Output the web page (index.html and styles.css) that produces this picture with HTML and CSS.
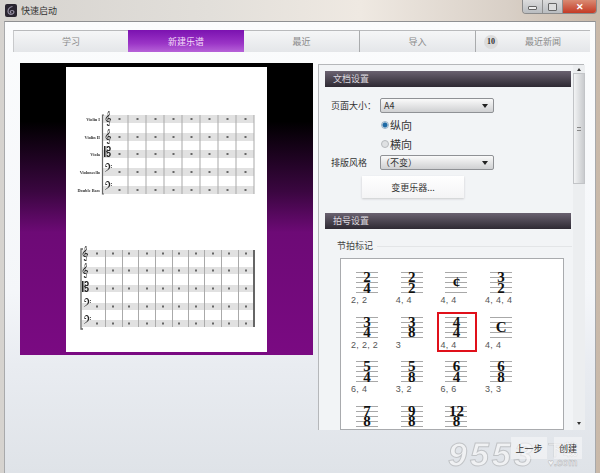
FILE: index.html
```html
<!DOCTYPE html>
<html lang="zh">
<head>
<meta charset="utf-8">
<title>快速启动</title>
<link rel="stylesheet" href="styles.css">
</head>
<body>
<div class="window">
  <header class="titlebar">
    <div class="app-icon"><svg viewBox="0 0 12 13" width="12" height="13"><rect width="12" height="13" rx="2" fill="#2a2530"/><path d="M7.5 2.5C5 3 3 5 3 7.5S5.500 11 7.500 10 9.500 6.500 7 6.500 5 9 6.500 9" fill="none" stroke="#9a93a8" stroke-width="1.200"/></svg></div>
    <span class="title">快速启动</span>
    <div class="controls">
      <div class="ctl ctl-min"><i></i></div>
      <div class="ctl ctl-max"><i></i></div>
      <div class="ctl ctl-close">✕</div>
    </div>
  </header>
  <div class="client">
    <nav class="tabs">
      <div class="tab">学习</div>
      <div class="tab active">新建乐谱</div>
      <div class="tab">最近</div>
      <div class="tab">导入</div>
      <div class="tab news"><span class="badge">10</span><span class="news-label">最近新闻</span></div>
    </nav>
    <main class="main">
      <section class="preview">
        <div class="sheet">
          <svg class="score" viewBox="66 67 201 285" width="201" height="285">
            <defs>
              <g id="rests1">
                <rect x="103" y="0" width="151" height="8" fill="#e1e1e1"/>
                <rect x="118.500" y="3" width="2" height="2" fill="#666"/><rect x="136.500" y="3" width="2" height="2" fill="#666"/><rect x="154.500" y="3" width="2" height="2" fill="#666"/><rect x="172.500" y="3" width="2" height="2" fill="#666"/><rect x="190.500" y="3" width="2" height="2" fill="#666"/><rect x="208.500" y="3" width="2" height="2" fill="#666"/><rect x="226.500" y="3" width="2" height="2" fill="#666"/><rect x="244.500" y="3" width="2" height="2" fill="#666"/>
              </g>
              <g id="rests2">
                <rect x="82" y="0" width="172" height="7" fill="#e1e1e1"/>
                <rect x="96" y="2.500" width="2" height="2" fill="#666"/><rect x="112" y="2.500" width="2" height="2" fill="#666"/><rect x="128" y="2.500" width="2" height="2" fill="#666"/><rect x="146" y="2.500" width="2" height="2" fill="#666"/><rect x="162" y="2.500" width="2" height="2" fill="#666"/><rect x="178" y="2.500" width="2" height="2" fill="#666"/><rect x="195" y="2.500" width="2" height="2" fill="#666"/><rect x="212" y="2.500" width="2" height="2" fill="#666"/><rect x="228" y="2.500" width="2" height="2" fill="#666"/><rect x="245" y="2.500" width="2" height="2" fill="#666"/>
              </g>
            </defs>
            <use href="#rests1" y="115"/><use href="#rests1" y="133"/><use href="#rests1" y="150"/><use href="#rests1" y="168"/><use href="#rests1" y="186"/>
            <g fill="#aaa">
              <rect x="127.500" y="115" width="1" height="79"/><rect x="145.500" y="115" width="1" height="79"/><rect x="163.500" y="115" width="1" height="79"/><rect x="181.500" y="115" width="1" height="79"/><rect x="199.500" y="115" width="1" height="79"/><rect x="217.500" y="115" width="1" height="79"/><rect x="235.500" y="115" width="1" height="79"/><rect x="253.500" y="115" width="1" height="79"/>
            </g>
            <path d="M104 115H102.500V194H104" fill="none" stroke="#666" stroke-width="1.200"/>
            <g class="labels">
              <text x="100" y="121">Violin I</text>
              <text x="100" y="139">Violin II</text>
              <text x="100" y="156">Viola</text>
              <text x="100" y="174">Violoncello</text>
              <text x="100" y="192">Double Bass</text>
            </g>
            <g class="clefs">
              <text x="104" y="122">𝄞</text><text x="104" y="140">𝄞</text><text x="104" y="157" class="c">𝄡</text><text x="104" y="174" class="f">𝄢</text><text x="104" y="192" class="f">𝄢</text>
            </g>
            <use href="#rests2" y="250"/><use href="#rests2" y="267"/><use href="#rests2" y="285"/><use href="#rests2" y="303"/><use href="#rests2" y="320"/>
            <g fill="#aaa">
              <rect x="105" y="250" width="1" height="77"/><rect x="122" y="250" width="1" height="77"/><rect x="138" y="250" width="1" height="77"/><rect x="155" y="250" width="1" height="77"/><rect x="172" y="250" width="1" height="77"/><rect x="188" y="250" width="1" height="77"/><rect x="204" y="250" width="1" height="77"/><rect x="221" y="250" width="1" height="77"/><rect x="238" y="250" width="1" height="77"/>
            </g>
            <rect x="253" y="250" width="2" height="77" fill="#666"/>
            <path d="M83 249H81V329H83" fill="none" stroke="#666" stroke-width="1.300"/>
            <g class="clefs">
              <text x="81" y="257">𝄞</text><text x="81" y="274">𝄞</text><text x="82" y="292" class="c">𝄡</text><text x="83" y="309" class="f">𝄢</text><text x="83" y="326" class="f">𝄢</text>
            </g>
          </svg>
        </div>
      </section>
      <aside class="settings">
        <div class="settings-body">
          <h2 class="section-head">文档设置</h2>
          <div class="form">
            <div class="row"><label class="row-label">页面大小：</label><div class="select">A4<span class="caret"></span></div></div>
            <div class="radio-row"><span class="radio on"></span>纵向</div>
            <div class="radio-row"><span class="radio"></span>横向</div>
            <div class="row"><label class="row-label">排版风格</label><div class="select spaced">（不变）<span class="caret"></span></div></div>
            <button class="change-btn" type="button">变更乐器...</button>
          </div>
          <h2 class="section-head">拍号设置</h2>
          <div class="group-title">节拍标记</div>
          <div class="meter-box">
            <div class="meter"><div class="staff"><b>2</b><b>4</b></div><span class="beat">2, 2</span></div>
            <div class="meter"><div class="staff"><b>2</b><b>2</b></div><span class="beat">4, 4</span></div>
            <div class="meter"><div class="staff common"><b>¢</b></div><span class="beat">4, 4</span></div>
            <div class="meter"><div class="staff"><b>3</b><b>2</b></div><span class="beat">4, 4, 4</span></div>
            <div class="meter"><div class="staff"><b>3</b><b>4</b></div><span class="beat">2, 2, 2</span></div>
            <div class="meter"><div class="staff"><b>3</b><b>8</b></div><span class="beat">3</span></div>
            <div class="meter selected"><div class="staff"><b>4</b><b>4</b></div><span class="beat">4, 4</span></div>
            <div class="meter"><div class="staff common"><b>C</b></div><span class="beat">4, 4</span></div>
            <div class="meter"><div class="staff"><b>5</b><b>4</b></div><span class="beat">6, 4</span></div>
            <div class="meter"><div class="staff"><b>5</b><b>8</b></div><span class="beat">3, 2</span></div>
            <div class="meter"><div class="staff"><b>6</b><b>4</b></div><span class="beat">6, 6</span></div>
            <div class="meter"><div class="staff"><b>6</b><b>8</b></div><span class="beat">3, 3</span></div>
            <div class="meter"><div class="staff"><b>7</b><b>8</b></div></div>
            <div class="meter"><div class="staff"><b>9</b><b>8</b></div></div>
            <div class="meter"><div class="staff"><b>12</b><b>8</b></div></div>
          </div>
        </div>
        <div class="scrollbar">
          <span class="arrow up"></span>
          <div class="thumb"><i></i></div>
          <span class="arrow down"></span>
        </div>
      </aside>
    </main>
    <footer class="footer">
      <button class="foot-btn" type="button">上一步</button>
      <button class="foot-btn" type="button">创建</button>
    </footer>
  </div>
</div>
<div class="watermark"><span class="wm-num">9553</span><span class="wm-side"><span class="wm-cn">下载</span><span class="wm-com">♥.com</span></span></div>
</body>
</html>
```
FILE: styles.css
```css
* { box-sizing: border-box; }
html, body { margin: 0; padding: 0; width: 600px; height: 473px; overflow: hidden; }
body {
  font-family: "Noto Sans CJK SC", "Liberation Sans", sans-serif;
  position: relative;
  background: #d9d5cf;
}
.window {
  width: 600px;
  height: 473px;
  display: flex;
  flex-direction: column;
  background: linear-gradient(90deg, #d6d3cf 0%, #e2dfda 35%, #efe9e2 60%, #d8cfc6 85%, #c9b9a9 100%);
}
.titlebar {
  height: 21px;
  flex: none;
  display: flex;
  align-items: flex-start;
  padding: 4px 3px 0 5px;
  position: relative;
}
.app-icon { width: 12px; height: 13px; margin-right: 4px; }
.app-icon svg { display: block; }
.title { font-size: 9px; line-height: 13px; color: #333; }
.controls {
  margin-left: auto;
  margin-top: -4px;
  display: flex;
  height: 14px;
  border-radius: 0 0 4px 4px;
  overflow: hidden;
  border: 1px solid #8b8b8b;
  border-top: 0;
}
.ctl { height: 13px; display: flex; align-items: center; justify-content: center; }
.ctl-min, .ctl-max { width: 20px; background: linear-gradient(#dcdcdc, #b9bcc0); border-right: 1px solid #8f8f8f; }
.ctl-min i { width: 9px; height: 4px; margin-top: 3px; border: 1px solid #666; background: #eee; border-radius: 1px; }
.ctl-max i { width: 9px; height: 8px; border: 1px solid #666; background: #ddd; border-radius: 1px; }
.ctl-close { width: 33px; background: linear-gradient(#d98a72, #c43a25); color: #fff; font-size: 9px; font-weight: bold; line-height: 13px; }
.client {
  flex: 1;
  margin: 0 4px;
  padding: 8px 6px 0 9px;
  background: linear-gradient(#fbfcfd 0%, #f4f6f9 60%, #e9ecf1 76%, #dfe3e8 100%);
  border-top: 1px solid #8f9092;
  border-left: 1px solid #a8a9ab;
  border-right: 1px solid #a8a9ab;
  display: flex;
  flex-direction: column;
}
.tabs {
  display: grid;
  grid-template-columns: 115px 116px 115px 116px 115px;
  height: 22px;
  flex: none;
  margin-left: -1px;
  width: 577px;
}
.tab {
  display: flex;
  align-items: center;
  justify-content: center;
  font-size: 9px;
  color: #8a8a8a;
  background: linear-gradient(#f5f6f7, #e4e6e9);
  border-top: 1px solid #b9babc;
  border-left: 1px solid #a9abad;
}
.tab:first-child { border-left-color: #c8c9cb; }
.tab.active {
  color: #f3dcf8;
  border: 0;
  background: linear-gradient(#7b12b0 0%, #9a34c6 60%, #b662d8 100%);
}
.tab.active + .tab { border-left: 0; }
.tab.news { justify-content: flex-start; padding-left: 8px; }
.badge {
  width: 14px;
  height: 14px;
  border-radius: 50%;
  background: #dcdcdc;
  color: #333;
  font: bold 8px/14px "Liberation Serif", serif;
  text-align: center;
}
.news-label { margin-left: 27px; }
.main { display: flex; align-items: flex-start; margin: 11px 0 0 6px; flex: none; }
.preview {
  width: 293px;
  height: 292px;
  flex: none;
  padding: 4px 0 3px 46px;
  background: linear-gradient(#000 0%, #000 20%, #3a0640 44%, #6d0a76 58%, #7a0a82 100%);
}
.sheet { width: 201px; height: 285px; background: #fff; }
.score { display: block; filter: blur(.45px); }
.labels text { font: bold 4.300px "Liberation Serif", serif; fill: #333; text-anchor: end; }
.clefs text { font: 13px "DejaVu Sans", sans-serif; fill: #222; }
.settings {
  width: 266px;
  height: 366px;
  flex: none;
  margin: 1px 0 0 5px;
  border: 1px solid #b5b7ba;
  border-bottom: 0;
  display: flex;
  background: #f2f4f6;
}
.settings-body { width: 253px; height: 365px; overflow: hidden; padding: 6px 0 0 6px; flex: none; }
.section-head {
  margin: 0;
  width: 246px;
  height: 16px;
  padding-left: 8px;
  font-size: 9px;
  font-weight: normal;
  line-height: 16px;
  color: #dcd8de;
  background: linear-gradient(#6a6270, #2e2a33);
}
.form { height: 126px; padding-top: 11px; color: #333; font-size: 9px; position: relative; }
.row { display: flex; align-items: center; height: 15px; padding-left: 6px; }
.row-label { width: 49px; flex: none; white-space: nowrap; }
.select {
  width: 114px;
  height: 15px;
  padding-left: 3px;
  border: 1px solid #8f9195;
  border-radius: 2px;
  background: linear-gradient(#fafafa, #cfd0d2);
  font-size: 9px;
  line-height: 13px;
  color: #333;
  display: flex;
  align-items: center;
  justify-content: space-between;
  padding-right: 5px;
}
.select.spaced { padding-left: 0; }
.caret { width: 0; height: 0; border: 3.500px solid transparent; border-top: 4px solid #222; border-bottom: 0; }
.radio-row { display: flex; align-items: center; height: 19px; padding-left: 56px; margin-top: 2px; font-size: 11px; }
.radio-row + .radio-row { margin-top: 0; margin-bottom: 2px; }
.radio {
  width: 8px;
  height: 8px;
  border-radius: 50%;
  margin-right: 1px;
  background: #dfe1e3;
  border: 1px solid #b7babd;
}
.radio.on { background: radial-gradient(circle, #1f6aa5 0 2px, #cfe0ee 3px); border-color: #9db3c5; }
.change-btn {
  display: block;
  width: 102px;
  height: 22px;
  margin: 6px 0 0 37px;
  border: 0;
  background: linear-gradient(#fff, #f4f4f5);
  box-shadow: 0 1px 2px #c9cacc;
  font: 9px "Noto Sans CJK SC", sans-serif;
  color: #333;
}
.group-title {
  display: flex;
  align-items: center;
  gap: 4px;
  width: 239px;
  font-size: 9px;
  line-height: 14px;
  color: #444;
  margin: 10px 0 0 12px;
}
.group-title::after { content: ""; flex: 1; border-top: 1px solid #e3e5e7; }
.meter-box {
  width: 224px;
  height: 172px;
  margin: 5px 0 0 15px;
  padding: 13px 0 0 10px;
  border: 1px solid #a9abae;
  background: #fff;
  display: grid;
  grid-template-columns: repeat(4, 44.700px);
  grid-auto-rows: 44.500px;
  overflow: hidden;
}
.meter { position: relative; }
.staff {
  width: 22px;
  height: 21px;
  margin-left: 5px;
  background: repeating-linear-gradient(#a8a8a8 0 1px, #fff 1px 5px);
  display: flex;
  flex-direction: column;
  align-items: center;
  font-family: "Liberation Serif", serif;
}
.staff b { font-size: 15px; line-height: 10.500px; color: #111; font-weight: bold; }
.staff.common { justify-content: center; }
.staff.common b { font: bold 15px/21px "Liberation Serif", serif; }
.beat {
  display: block;
  margin-top: 1px;
  font: 9px/12px "Liberation Sans", sans-serif;
  color: #555;
  letter-spacing: .3px;
}
.selected::after {
  content: "";
  position: absolute;
  left: -3px;
  top: -5px;
  width: 36px;
  height: 36px;
  border: 2px solid #e0101a;
}
.scrollbar {
  width: 12px;
  height: 365px;
  flex: none;
  margin-left: 1px;
  background: #eceef0;
  display: flex;
  flex-direction: column;
  align-items: center;
  position: relative;
}
.thumb {
  width: 12px;
  height: 111px;
  margin-top: 8px;
  background: linear-gradient(90deg, #f2f3f4, #c9cbce);
  border: 1px solid #c2c4c7;
  display: flex;
  align-items: center;
  justify-content: center;
}
.thumb i { width: 4px; height: 4px; border-top: 1px solid #888; border-bottom: 1px solid #888; }
.arrow { width: 0; height: 0; border: 2.500px solid transparent; position: absolute; }
.arrow.up { top: 3px; border-top: 0; border-bottom: 3px solid #333; }
.arrow.down { bottom: 5px; border-bottom: 0; border-top: 3px solid #333; }
.footer {
  display: flex;
  justify-content: flex-end;
  gap: 7px;
  margin-top: 7px;
  padding-right: 7px;
  position: relative;
  z-index: 2;
}
.foot-btn {
  height: 22px;
  width: 36px;
  padding: 0;
  border: 0;
  background: rgba(246, 247, 248, .6);
  font: 9px "Noto Sans CJK SC", sans-serif;
  color: #333;
}
.foot-btn + .foot-btn { width: 28px; }
.watermark {
  position: absolute;
  z-index: 1;
  left: 448px;
  top: 437px;
  display: flex;
  gap: 10px;
  pointer-events: none;
  color: #f4f5f6;
}
.wm-num {
  font: italic bold 34px/34px "Liberation Sans", sans-serif;
  letter-spacing: 3px;
  -webkit-text-stroke: 1px #b9bbbe;
  opacity: .8;
}
.wm-side { display: flex; flex-direction: column; align-items: center; margin-left: 2px; }
.wm-cn { font-size: 15px; line-height: 17px; font-weight: bold; -webkit-text-stroke: .5px #b5b7ba; opacity: .8; margin-top: 3px; }
.wm-com { font: bold 10px/11px "Liberation Sans", sans-serif; -webkit-text-stroke: .5px #b5b7ba; }
```
